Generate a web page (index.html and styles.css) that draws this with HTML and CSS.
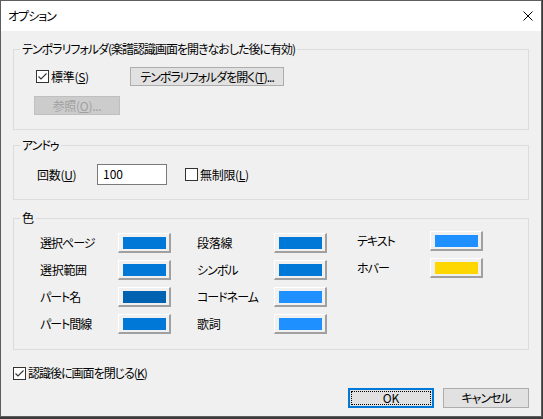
FILE: index.html
```html
<!DOCTYPE html>
<html lang="ja">
<head>
<meta charset="utf-8">
<title>オプション</title>
<link rel="stylesheet" href="styles.css">
</head>
<body>
<div class="window">
  <div class="titlebar">
    <span class="title">オプション</span>
    <span class="close"><svg width="10" height="10" viewBox="0 0 10 10"><path d="M0.5 0.5 L9.5 9.5 M9.5 0.5 L0.5 9.5" stroke="#000" stroke-width="1" fill="none"/></svg></span>
  </div>
  <div class="content">
    <fieldset class="group">
      <legend>テンポラリフォルダ(楽譜認識画面を開きなおした後に有効)</legend>
      <div class="inner inner-temp">
        <div class="row">
          <label class="check check-std"><span class="box"><svg width="11" height="11" viewBox="0 0 11 11"><path d="M1.5 5.5 L4 8 L9.5 2.5" stroke="#333" stroke-width="1.1" fill="none"/></svg></span><span class="kanji">標準(<u>S</u>)</span></label>
          <button class="btn btn-open">テンポラリフォルダを開く(<u>T</u>)...</button>
        </div>
        <div class="row row-browse">
          <button class="btn btn-browse" disabled><span class="kanji">参照(<u>O</u>)...</span></button>
        </div>
      </div>
    </fieldset>

    <fieldset class="group group-undo">
      <legend>アンドゥ</legend>
      <div class="inner inner-undo">
        <div class="row">
          <span class="undo-label kanji">回数(<u>U</u>)</span>
          <span class="edit">100</span>
          <label class="check"><span class="box"></span><span class="kanji">無制限(<u>L</u>)</span></label>
        </div>
      </div>
    </fieldset>

    <fieldset class="group group-color">
      <legend class="kanji">色</legend>
      <div class="inner inner-color">
        <div class="col col1">
          <span class="clabel">選択ページ</span><span class="swbtn"><span class="sw" style="background:#0078d7"></span></span>
          <span class="clabel kanji">選択範囲</span><span class="swbtn"><span class="sw" style="background:#0078d7"></span></span>
          <span class="clabel">パート名</span><span class="swbtn"><span class="sw" style="background:#0063b1"></span></span>
          <span class="clabel">パート間線</span><span class="swbtn"><span class="sw" style="background:#0078d7"></span></span>
        </div>
        <div class="col col2">
          <span class="clabel kanji">段落線</span><span class="swbtn"><span class="sw" style="background:#0078d7"></span></span>
          <span class="clabel">シンボル</span><span class="swbtn"><span class="sw" style="background:#0078d7"></span></span>
          <span class="clabel">コードネーム</span><span class="swbtn"><span class="sw" style="background:#1e90ff"></span></span>
          <span class="clabel kanji">歌詞</span><span class="swbtn"><span class="sw" style="background:#1e90ff"></span></span>
        </div>
        <div class="col col3">
          <span class="clabel">テキスト</span><span class="swbtn"><span class="sw" style="background:#1e90ff"></span></span>
          <span class="clabel">ホバー</span><span class="swbtn"><span class="sw" style="background:#ffd700"></span></span>
        </div>
      </div>
    </fieldset>

    <div class="close-row">
      <label class="check"><span class="box"><svg width="11" height="11" viewBox="0 0 11 11"><path d="M1.5 5.5 L4 8 L9.5 2.5" stroke="#333" stroke-width="1.1" fill="none"/></svg></span>認識後に画面を閉じる(<u>K</u>)</label>
    </div>
    <div class="actions">
      <button class="btn btn-ok"><span class="focus">OK</span></button>
      <button class="btn btn-cancel">キャンセル</button>
    </div>
  </div>
</div>
</body>
</html>
```

FILE: styles.css
```css
html, body {
  margin: 0;
  padding: 0;
}
body {
  background: #3b3b3b;
  font-family: "Noto Sans CJK JP", "Noto Sans", sans-serif;
  font-size: 12px;
  font-feature-settings: "palt" 1;
  letter-spacing: -1px;
  color: #000;
  width: 543px;
  height: 419px;
  overflow: hidden;
}
u {
  text-decoration: underline;
  text-underline-offset: 1px;
}
.kanji {
  letter-spacing: -0.3px;
}
.window {
  width: 542px;
  height: 417px;
  box-sizing: border-box;
  border: 1px solid #5e5e5e;
  background: #f0f0f0;
  display: flex;
  flex-direction: column;
}
.titlebar {
  height: 30px;
  flex: none;
  background: #fff;
  display: flex;
  align-items: center;
  justify-content: space-between;
  padding: 0 8px 0 7px;
}
.title {
  line-height: 14px;
}
.close {
  display: flex;
  width: 10px;
  height: 10px;
}
.content {
  flex: 1;
  padding: 11px 12px 0;
  display: flex;
  flex-direction: column;
}
.group {
  margin: 0;
  padding: 0;
  border: 1px solid #dcdcdc;
  min-width: 0;
}
.group legend {
  margin-left: 6px;
  padding: 0 2px;
  line-height: 14px;
}
.group-undo {
  margin-top: 8px;
}
.group-color {
  margin-top: 11px;
}
.inner-temp {
  padding: 11px 0 14px 20px;
}
.row {
  display: flex;
  align-items: center;
}
.row-browse {
  margin-top: 10px;
}
.check {
  display: flex;
  align-items: center;
  line-height: 14px;
}
.box {
  width: 13px;
  height: 13px;
  box-sizing: border-box;
  border: 1px solid #333;
  background: #fff;
  margin-right: 2px;
  display: flex;
  align-items: center;
  justify-content: center;
  flex: none;
}
.box svg {
  display: block;
}
.check-std {
  width: 94px;
  margin-left: 2px;
}
.btn {
  font: inherit;
  font-feature-settings: "palt" 1;
  letter-spacing: -1px;
  color: #000;
  margin: 0;
  padding: 0;
  height: 19px;
  box-sizing: border-box;
  background: #e1e1e1;
  border: 1px solid #adadad;
  border-radius: 0;
  display: flex;
  align-items: center;
  justify-content: center;
  line-height: 14px;
}
.btn-open {
  width: 154px;
}
.btn-browse {
  width: 86px;
  background: #cccccc;
  border-color: #bfbfbf;
  color: #a0a0a0;
}
.inner-undo {
  padding: 12px 0 14px 23px;
}
.undo-label {
  width: 60px;
  line-height: 14px;
}
.edit {
  width: 70px;
  height: 21px;
  box-sizing: border-box;
  border: 1px solid #7a7a7a;
  background: #fff;
  padding: 2px 0 0 5px;
  line-height: 14px;
  letter-spacing: 0;
  margin-right: 18px;
}
.inner-color {
  padding: 8px 0 15px 26px;
  display: flex;
  align-items: flex-start;
}
.col {
  display: grid;
  grid-template-columns: 78px 53px;
  grid-auto-rows: 20px;
  row-gap: 7px;
  align-items: center;
}
.col2 {
  margin-left: 26px;
  grid-template-columns: 77px 53px;
}
.col3 {
  margin-left: 30px;
  margin-top: -2px;
  grid-template-columns: 73px 53px;
}
.clabel {
  line-height: 14px;
  white-space: nowrap;
}
.swbtn {
  width: 53px;
  height: 20px;
  box-sizing: border-box;
  background: #f0f0f0;
  border-top: 1px solid #fff;
  border-left: 1px solid #fff;
  border-right: 2px solid #a0a0a0;
  border-bottom: 2px solid #a0a0a0;
  display: flex;
  padding: 3px 0 0 4px;
}
.sw {
  width: 43px;
  height: 12px;
}
.close-row {
  margin-top: 16px;
  height: 14px;
  display: flex;
  align-items: center;
}
.actions {
  margin-top: 8px;
  display: flex;
  justify-content: flex-end;
  gap: 9px;
}
.btn-ok, .btn-cancel {
  width: 86px;
  height: 20px;
}
.btn-ok {
  border: 2px solid #0078d7;
  padding: 1px;
}
.focus {
  flex: 1;
  align-self: stretch;
  border: 1px dotted #000;
  display: flex;
  align-items: center;
  justify-content: center;
  letter-spacing: 0;
}
```
